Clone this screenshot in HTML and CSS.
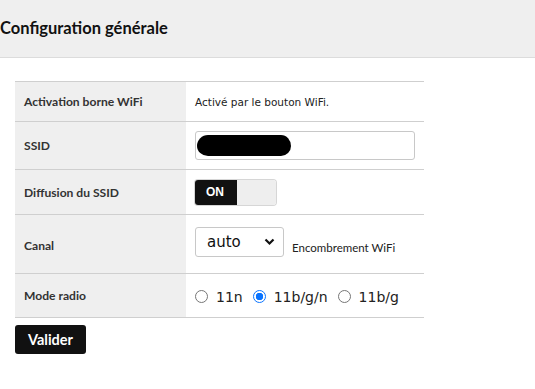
FILE: index.html
```html
<!DOCTYPE html>
<html lang="fr">
<head>
    <meta charset="UTF-8">
    <meta name="viewport" content="width=device-width, initial-scale=1.0">
    <title>Configuration générale</title>
    <link rel="stylesheet" href="styles.css">
</head>
<body>
    <div class="page-header">
        <h1>Configuration générale</h1>
    </div>

    <form class="wifi-form">
        <table class="config-table">
            <tr class="row-activation">
                <th>Activation borne WiFi</th>
                <td class="info-text">Activé par le bouton WiFi.</td>
            </tr>
            <tr class="row-ssid">
                <th>SSID</th>
                <td>
                    <div class="ssid-input"><span class="redacted"></span></div>
                </td>
            </tr>
            <tr class="row-diffusion">
                <th>Diffusion du SSID</th>
                <td>
                    <div class="toggle">
                        <span class="toggle-on">ON</span>
                        <span class="toggle-off"></span>
                    </div>
                </td>
            </tr>
            <tr class="row-canal">
                <th>Canal</th>
                <td>
                    <div class="canal-wrap">
                        <div class="select-box">
                            <span>auto</span>
                            <svg width="11" height="8" viewBox="0 0 11 8"><path d="M1.5 1.5 L5.5 5.5 L9.5 1.5" fill="none" stroke="#111" stroke-width="2.2"/></svg>
                        </div>
                        <span class="hint">Encombrement WiFi</span>
                    </div>
                </td>
            </tr>
            <tr class="row-mode">
                <th>Mode radio</th>
                <td>
                    <div class="radio-group">
                        <label><span class="radio"></span>11n</label>
                        <label><span class="radio checked"></span>11b/g/n</label>
                        <label><span class="radio"></span>11b/g</label>
                    </div>
                </td>
            </tr>
        </table>
        <button type="button" class="submit-btn">Valider</button>
    </form>
</body>
</html>
```

FILE: styles.css
```css
* {
    margin: 0;
    padding: 0;
    box-sizing: border-box;
}
body {
    background: #fff;
    font-family: 'Lato', 'Liberation Sans', sans-serif;
    color: #222;
}
.page-header {
    height: 58px;
    background: #efefef;
    border-bottom: 1px solid #dcdcdc;
    padding-top: 18px;
}
.page-header h1 {
    font-size: 16.5px;
    font-weight: 700;
    color: #111;
}
.wifi-form {
    padding: 23px 0 0 15px;
}
.config-table {
    width: 409px;
    border-collapse: collapse;
    border-top: 1px solid #cfcfcf;
}
.config-table tr {
    border-bottom: 1px solid #cfcfcf;
}
.config-table th {
    width: 171px;
    background: #efefef;
    text-align: left;
    font-size: 12.1px;
    font-weight: 700;
    color: #333;
    padding: 0 0 0 9px;
}
.config-table td {
    padding: 0 0 0 9px;
    vertical-align: middle;
}
.row-activation { height: 40px; }
.row-ssid { height: 48px; }
.row-diffusion { height: 45px; }
.row-canal { height: 59px; }
.row-mode { height: 44px; }
.row-canal th { padding-top: 2px; }
.row-mode th { padding-bottom: 1px; }
.info-text {
    font-family: 'DejaVu Sans', sans-serif;
    font-size: 10.5px;
    color: #222;
}
.ssid-input {
    width: 220px;
    height: 29px;
    border: 1px solid #c8c8c8;
    border-radius: 3px;
    background: #fff;
    padding: 3px 0 0 1px;
}
.redacted {
    display: block;
    width: 94px;
    height: 21px;
    background: #000;
    border-radius: 11px 10px 10px 11px / 11px 11px 10px 10px;
}
.toggle {
    display: flex;
    width: 81px;
    height: 25px;
    border-radius: 3px;
    overflow: hidden;
    box-shadow: 0 0 0 1px #d6d6d6;
}
.toggle-on {
    width: 42px;
    background: #111;
    color: #fff;
    font-family: 'Liberation Sans', sans-serif;
    font-weight: 700;
    font-size: 12px;
    display: flex;
    align-items: center;
    padding-left: 11px;
}
.toggle-off {
    flex: 1;
    background: #eeeeee;
}
.canal-wrap {
    display: flex;
    align-items: center;
    gap: 8px;
    padding-bottom: 4px;
}
.select-box {
    width: 89px;
    height: 30px;
    border: 1px solid #c8c8c8;
    border-radius: 3px;
    display: flex;
    align-items: center;
    justify-content: space-between;
    padding: 0 8px 1px 11px;
    font-family: 'DejaVu Sans', sans-serif;
    font-size: 15px;
    color: #111;
}
.hint {
    font-size: 11.5px;
    color: #222;
    padding-top: 10px;
}
.radio-group {
    display: flex;
    align-items: center;
    font-family: 'DejaVu Sans', sans-serif;
    font-size: 14px;
    color: #222;
    gap: 10px;
    padding-top: 2px;
}
.radio-group label {
    display: flex;
    align-items: center;
    gap: 8px;
}
.radio {
    width: 13px;
    height: 13px;
    border: 1px solid #767676;
    border-radius: 50%;
    background: #fff;
}
.radio.checked {
    border: 1.5px solid #0a74ff;
    background: radial-gradient(circle, #0a74ff 0 3.5px, #fff 4px);
}
.submit-btn {
    margin-top: 7px;
    width: 71px;
    height: 29px;
    background: #111;
    color: #fff;
    border: none;
    border-radius: 3px;
    font-family: 'Lato', sans-serif;
    font-weight: 700;
    font-size: 14.5px;
}
```
